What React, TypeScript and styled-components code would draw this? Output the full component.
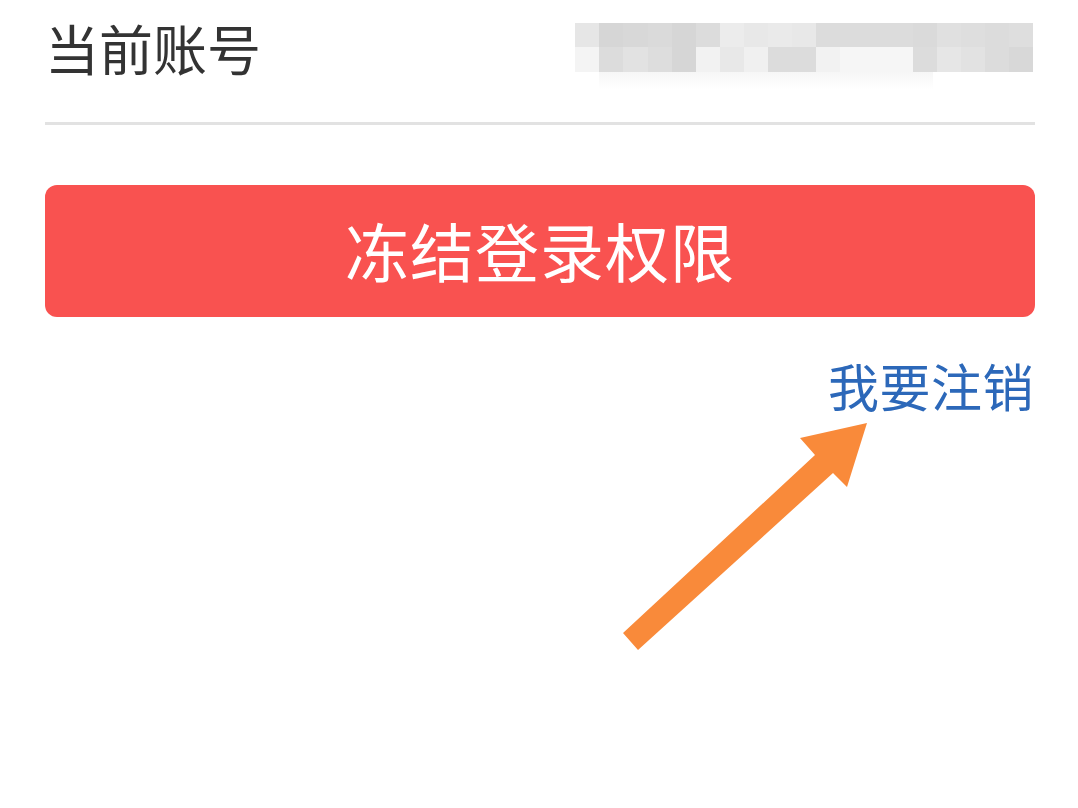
import React from "react";
import styled, { createGlobalStyle } from "styled-components";

const GlobalStyle = createGlobalStyle`
  html, body { margin: 0; padding: 0; background: #ffffff; }
  body { font-family: "Noto Sans CJK SC", "Noto Sans", sans-serif; }
`;

const Page = styled.div`
  position: relative;
  box-sizing: border-box;
  width: 1078px;
  height: 808px;
  padding: 0 43px 0 45px;
  background: #ffffff;
  overflow: hidden;
`;

const AccountRow = styled.div`
  display: flex;
  justify-content: space-between;
  align-items: flex-start;
  box-sizing: border-box;
  height: 122px;
  padding-top: 18px;
`;

const Title = styled.div`
  font-size: 54px;
  line-height: 60px;
  color: #333333;
  letter-spacing: 0;
`;

const Masked = styled.div`
  display: grid;
  grid-template-columns: repeat(19, 24.1px);
  grid-template-rows: 24px 25px;
  margin-top: 5px;
  margin-right: 2px;
  position: relative;
  &::after {
    content: "";
    position: absolute;
    left: 24px;
    right: 100px;
    top: 49px;
    height: 18px;
    background: linear-gradient(#f6f6f6, rgba(255, 255, 255, 0));
  }
`;

const Cell = styled.div<{ $g: number }>`
  background: ${(p) => `rgb(${p.$g}, ${p.$g}, ${p.$g})`};
`;

const Divider = styled.div`
  height: 3px;
  background: #e2e2e2;
`;

const FreezeButton = styled.button`
  display: flex;
  align-items: center;
  justify-content: center;
  width: 100%;
  height: 132px;
  margin-top: 60px;
  border: none;
  border-radius: 12px;
  background: #f95250;
  color: #ffffff;
  font-family: "Noto Sans CJK SC", "Noto Sans", sans-serif;
  font-size: 64px;
  line-height: 1;
  letter-spacing: 1px;
  padding: 0 0 4px 0;
  cursor: pointer;
`;

const LinkRow = styled.div`
  display: flex;
  justify-content: flex-end;
  margin-top: 38px;
  padding-right: 1px;
`;

const LogoutLink = styled.a`
  font-size: 51px;
  line-height: 60px;
  color: #2c68b9;
  text-decoration: none;
  letter-spacing: 0.5px;
`;

const ArrowMark = styled.svg`
  position: absolute;
  left: 615px;
  top: 415px;
  width: 260px;
  height: 245px;
`;

const row1 = [230, 214, 216, 218, 214, 220, 236, 232, 234, 232, 220, 220, 220, 220, 218, 224, 222, 220, 222];
const row2 = [244, 220, 226, 221, 214, 242, 232, 240, 220, 220, 242, 246, 246, 246, 220, 230, 226, 220, 216];

export default function App() {
  return (
    <>
      <GlobalStyle />
      <Page>
        <AccountRow>
          <Title>当前账号</Title>
          <Masked>
            {row1.map((g, i) => (
              <Cell key={`a${i}`} $g={g} />
            ))}
            {row2.map((g, i) => (
              <Cell key={`b${i}`} $g={g} />
            ))}
          </Masked>
        </AccountRow>
        <Divider />
        <FreezeButton>冻结登录权限</FreezeButton>
        <LinkRow>
          <LogoutLink href="#">我要注销</LogoutLink>
        </LinkRow>
        <ArrowMark viewBox="0 0 260 245">
          <polygon
            points="8,218 200,40 185,23 252,8 232,72 218,58 23,235"
            fill="#f98a3a"
          />
        </ArrowMark>
      </Page>
    </>
  );
}
